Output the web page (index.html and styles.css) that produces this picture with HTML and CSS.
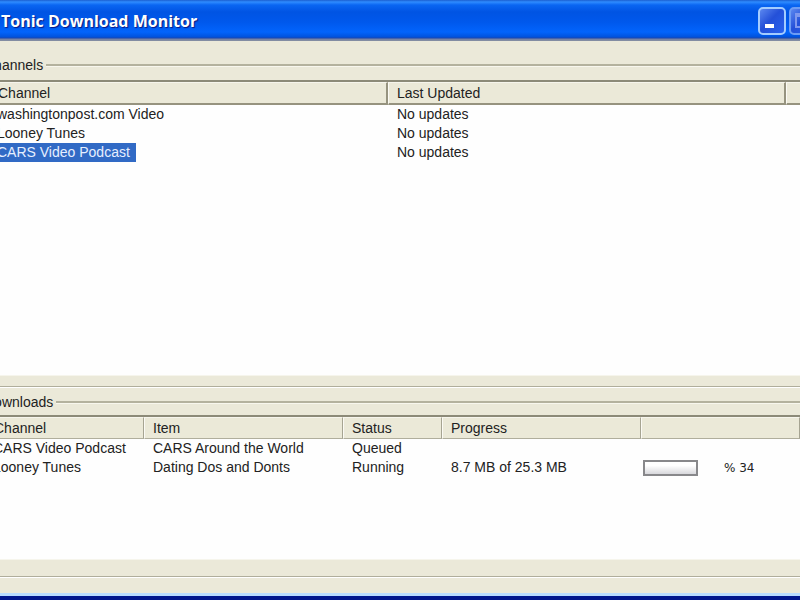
FILE: index.html
```
<!DOCTYPE html>
<html lang="en">
<head>
<meta charset="utf-8">
<title>Tonic Download Monitor</title>
<link rel="stylesheet" href="styles.css">
</head>
<body>
<main class="window">
  <header class="titlebar">
    <h1>Tonic Download Monitor</h1>
    <div class="controls">
      <button type="button" class="control" aria-label="Minimize">
        <svg width="28" height="28" viewBox="0 0 28 28"><rect x="7" y="17" width="9" height="4" fill="#fff"/></svg>
      </button>
      <button type="button" class="control dim" aria-label="Maximize">
        <svg width="28" height="28" viewBox="0 0 28 28"><path d="M7 7h14v13H7zM7 9h14" fill="none" stroke="#7f98ee" stroke-width="2"/></svg>
      </button>
    </div>
  </header>
  <div class="content">
    <section class="group channels">
      <h2 class="legend">Channels</h2>
      <div class="list">
        <table>
          <colgroup><col class="c-channel"><col class="c-updated"><col></colgroup>
          <thead><tr><th>Channel</th><th>Last Updated</th><th></th></tr></thead>
          <tbody>
            <tr><td>washingtonpost.com Video</td><td>No updates</td><td></td></tr>
            <tr><td>Looney Tunes</td><td>No updates</td><td></td></tr>
            <tr><td><span class="selected">CARS Video Podcast</span></td><td>No updates</td><td></td></tr>
          </tbody>
        </table>
      </div>
    </section>
    <section class="group downloads">
      <h2 class="legend">Downloads</h2>
      <div class="list">
        <table>
          <colgroup><col class="d-channel"><col class="d-item"><col class="d-status"><col class="d-progress"><col class="d-bar"><col></colgroup>
          <thead><tr><th>Channel</th><th>Item</th><th>Status</th><th>Progress</th><th></th><th></th></tr></thead>
          <tbody>
            <tr><td>CARS Video Podcast</td><td>CARS Around the World</td><td>Queued</td><td></td><td></td><td></td></tr>
            <tr><td>Looney Tunes</td><td>Dating Dos and Donts</td><td>Running</td><td>8.7 MB of 25.3 MB</td>
              <td class="meter-cell"><div class="meter"><progress id="p1" max="100" value="34"></progress><label for="p1">% 34</label></div></td><td></td></tr>
          </tbody>
        </table>
      </div>
    </section>
  </div>
</main>
</body>
</html>
```
FILE: styles.css
```
* { box-sizing: border-box; }

body {
  margin: 0;
  overflow: hidden;
  background: #ebe9d9;
  color: #222;
  font: 14px/19px "Liberation Sans", sans-serif;
}

.window {
  display: flex;
  flex-direction: column;
  height: 100vh;
  margin: 0 -24px;
  border-bottom: 4px solid #00168c;
}

.titlebar {
  display: flex;
  justify-content: space-between;
  align-items: center;
  flex: none;
  height: 41px;
  padding: 0 7px 0 25px;
  background: linear-gradient(#1c5fd0 0, #2f8cff 2px, #0a66f2 5px, #0054e3 12px, #0058ec 22px, #0264fc 32px, #0052dc 37px, #1b46ae 38px, #7080a8 39px, #8890a0 41px);
}

.titlebar h1 {
  margin: 0;
  color: #fff;
  font: bold 16px/24px "Open Sans", sans-serif;
  text-shadow: 1px 1px 1px #0a1883;
}

.controls { display: flex; gap: 3px; }

.control {
  width: 28px;
  height: 28px;
  padding: 0;
  border: 2px solid #a4ccff;
  border-radius: 5px;
  background: linear-gradient(135deg, #5c88f0, #2450d8 45%, #2a62ee);
}
.control svg { display: block; margin: -2px; }
.control.dim { border-color: #6d9cf4; }

.content {
  display: flex;
  flex-direction: column;
  flex: 1;
  border-bottom: 3px solid #b8dcff;
}

.group {
  display: flex;
  flex-direction: column;
  border-bottom: 1px solid #b0ae9c;
  box-shadow: 0 1px #fff;
}
.channels { flex: 0 0 346px; padding: 15px 0 10px; }
.downloads { flex: 0 0 190px; padding: 6px 0 16px; }

.legend {
  display: flex;
  align-items: center;
  gap: 3px;
  flex: none;
  margin: 0 0 5px;
  padding-left: 8px;
  font: inherit;
}
.downloads .legend { margin-bottom: 3px; }
.legend::after {
  content: "";
  flex: 1;
  height: 2px;
  background: #b4b29e;
  border-bottom: 1px solid #f8f7ee;
}

.list {
  flex: 1;
  border-top: 2px solid #8c8a78;
  border-bottom: 1px solid #f6f5ec;
  background: #fefefe;
}

table {
  width: 100%;
  border-collapse: separate;
  border-spacing: 0;
  table-layout: fixed;
}
th, td {
  padding: 0 0 0 8px;
  text-align: left;
  font-weight: normal;
  white-space: nowrap;
}
th {
  height: 22px;
  background: #ebe9d8;
  border-top: 1px solid #f6f5ec;
  border-left: 1px solid #fbfaf4;
  border-right: 1px solid #a6a492;
  border-bottom: 1px solid #b0ae9c;
}
td { height: 19px; padding-left: 9px; }

.channels th { height: 23px; border-right: 2px solid #96937f; border-bottom: 2px solid #96937f; }
.channels th:first-child, .channels td:first-child { padding-left: 21px; }
.downloads th:first-child, .downloads td:first-child { padding-left: 17px; }

.c-channel { width: 412px; }
.c-updated { width: 398px; }
.d-channel { width: 168px; }
.d-item { width: 199px; }
.d-status { width: 99px; }
.d-progress { width: 199px; }
.d-bar { width: 159px; }

.selected {
  display: inline-block;
  padding: 0 6px 0 8px;
  margin-left: -8px;
  background: #316ac5;
  color: #e6efff;
}

.downloads .meter-cell { padding-left: 2px; }
.meter { display: flex; align-items: center; gap: 26px; }
.meter label { font: 12px/18px "DejaVu Sans", sans-serif; }
progress {
  appearance: none;
  width: 55px;
  height: 16px;
  border: 2px solid #88888b;
  background: linear-gradient(#fff 30%, #d8d8dc);
}
progress::-webkit-progress-bar { background: linear-gradient(#fff 30%, #d8d8dc); }
progress::-webkit-progress-value { background: transparent; }
```
